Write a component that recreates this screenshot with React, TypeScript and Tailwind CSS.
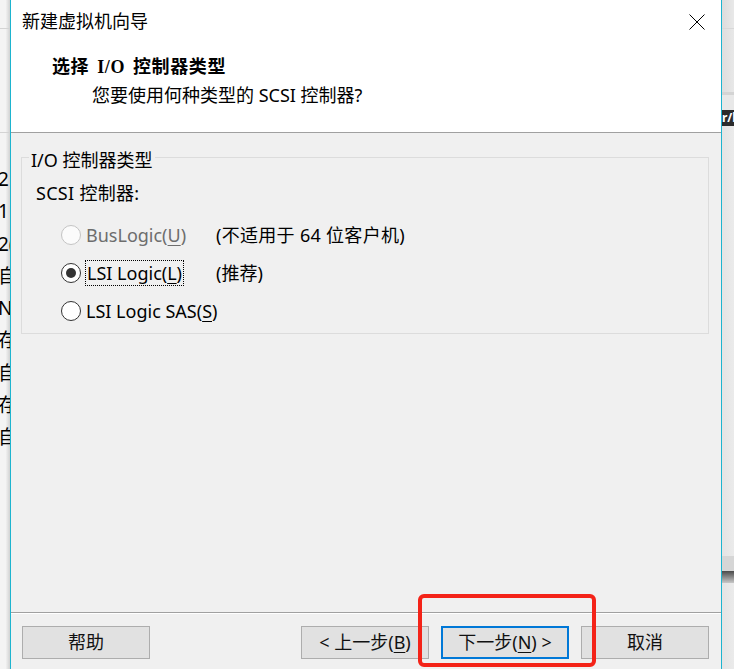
import React from "react";

const ui = "font-[family-name:'Noto_Sans','Noto_Sans_CJK_SC',sans-serif]";

function Radio({ checked, disabled }: { checked?: boolean; disabled?: boolean }) {
  return (
    <span
      className={
        "flex h-[20px] w-[20px] shrink-0 items-center justify-center rounded-full border " +
        (disabled ? "border-[#c4c4c4] bg-[#fbfbfb]" : "border-[#333333] bg-white")
      }
    >
      {checked && <span className="h-[10px] w-[10px] rounded-full bg-[#333333]" />}
    </span>
  );
}

function Btn({ children, primary }: { children: React.ReactNode; primary?: boolean }) {
  return (
    <div
      className={
        "flex h-[33px] w-[128px] items-center justify-center bg-[#e1e1e1] text-[18px] text-[#111] " +
        (primary ? "border-2 border-[#0078d7]" : "border border-[#adadad]")
      }
    >
      {children}
    </div>
  );
}

export default function App() {
  const leftChars = ["2", "1", "2(", "自", "N", "存", "自", "存", "自"];
  return (
    <div className={"relative flex h-[669px] w-[734px] overflow-hidden bg-[#f0f0f0] text-black " + ui}>
      {/* left background strip */}
      <div className="flex w-[10px] shrink-0 flex-col overflow-hidden bg-[linear-gradient(to_right,#f4f4f4_55%,#d2d2d2)]">
        <div className="h-[29px] shrink-0 border-b border-[#d4d4d4]" />
        <div className="h-[104px] shrink-0 border-b border-[#d4d4d4]" />
        <div className="mt-[30px] flex flex-col">
          {leftChars.map((c, i) => (
            <div key={i} className="h-[32.3px] whitespace-nowrap text-[19px] leading-[32px] ml-[-2px]">
              {c}
            </div>
          ))}
        </div>
      </div>

      {/* dialog */}
      <div className="flex w-[712px] shrink-0 flex-col border-x border-[#1db4cf]">
        {/* header */}
        <div className="h-[133px] shrink-0 border-b border-[#a0a0a0] bg-white">
          <div className="flex h-[42px] items-center justify-between pl-[11px] pr-[16px]">
            <span className="text-[18px]">新建虚拟机向导</span>
            <svg width="16" height="16" viewBox="0 0 16 16" className="mt-[1px]">
              <path d="M0.5 0.5 L15.5 15.5 M15.5 0.5 L0.5 15.5" stroke="#000" strokeWidth="1" />
            </svg>
          </div>
          <div className="ml-[41px] mt-[13px] h-[24px] text-[18px] font-bold leading-[24px] tracking-[0.6px] font-[family-name:'Liberation_Serif','Noto_Sans_CJK_SC',serif]">
            选择<span className="mx-[8px]">I/O</span>控制器类型
          </div>
          <div className="ml-[81px] mt-[4px] h-[24px] text-[18px] leading-[24px]">
            您要使用何种类型的 SCSI 控制器?
          </div>
        </div>

        {/* body */}
        <div className="h-[479px] shrink-0 bg-[#f0f0f0] pl-[10px] pr-[12px] pt-[24px]">
          <div className="relative h-[177px] border border-[#dcdcdc]">
            <span className="absolute left-[7px] top-[-10px] bg-[#f0f0f0] px-[2px] text-[18px] leading-[24px]">
              I/O 控制器类型
            </span>
            <div className="pl-[14px] pt-[23px] text-[18px] leading-[24px] tracking-[0.3px]">SCSI 控制器:</div>
            <div className="mt-[18px] flex flex-col gap-[14px] pl-[39px] text-[18px] leading-[24px]">
              <div className="flex items-center">
                <Radio disabled />
                <span className="ml-[5px] w-[130px] text-[#6d6d6d]">
                  BusLogic(<span className="underline underline-offset-[3px]">U</span>)
                </span>
                <span className="tracking-[0.3px]">(不适用于 64 位客户机)</span>
              </div>
              <div className="flex items-center">
                <Radio checked />
                <span className="ml-[4px] w-[131px]">
                  <span className="border border-dotted border-black px-[1px] py-[0px]">
                    LSI Logic(<span className="underline underline-offset-[3px]">L</span>)
                  </span>
                </span>
                <span>(推荐)</span>
              </div>
              <div className="flex items-center">
                <Radio />
                <span className="ml-[5px]">
                  LSI Logic SAS(<span className="underline underline-offset-[3px]">S</span>)
                </span>
              </div>
            </div>
          </div>
        </div>

        {/* footer */}
        <div className="border-t border-[#a0a0a0]" />
        <div className="h-[1px] bg-white" />
        <div className="mt-[12px] flex justify-between pl-[11px] pr-[12px]">
          <Btn>帮助</Btn>
          <div className="flex gap-[12px]">
            <Btn>
              &lt; 上一步(<span className="underline underline-offset-[3px]">B</span>)
            </Btn>
            <Btn primary>
              下一步(<span className="underline underline-offset-[3px]">N</span>) &gt;
            </Btn>
            <Btn>取消</Btn>
          </div>
        </div>
      </div>

      {/* right background strip */}
      <div className="flex flex-1 flex-col bg-[#efefef]">
        <div className="h-[29px] shrink-0 border-b border-[#d8d8d8] bg-[linear-gradient(to_right,#dcdcdc,#f2f2f2)]" />
        <div className="h-[63px] shrink-0 bg-[linear-gradient(to_right,#dedede,#efefef)]" />
        <div className="h-[3px] shrink-0 bg-[#d4d4d4]" />
        <div className="h-[15px] shrink-0 bg-[#e8e8e8]" />
        <div className="h-[16px] shrink-0 overflow-hidden whitespace-nowrap bg-[#2b2b2b] text-[12px] font-bold leading-[16px] text-white">
          r/lo
        </div>
        <div className="h-[430px] shrink-0 bg-[linear-gradient(to_right,#e4e4e4,#f0f0f0)]" />
        <div className="h-[15px] shrink-0 bg-[#d6d6d6]" />
        <div className="h-[12px] shrink-0 bg-[linear-gradient(to_bottom,#4a4a4a,#c8c8c8)]" />
        <div className="flex-1 bg-[linear-gradient(to_right,#e4e4e4,#f0f0f0)]" />
      </div>

      {/* red annotation box */}
      <div className="absolute left-[418px] top-[594px] h-[73px] w-[178px] rounded-[6px] border-4 border-[#f42318]" />
    </div>
  );
}
